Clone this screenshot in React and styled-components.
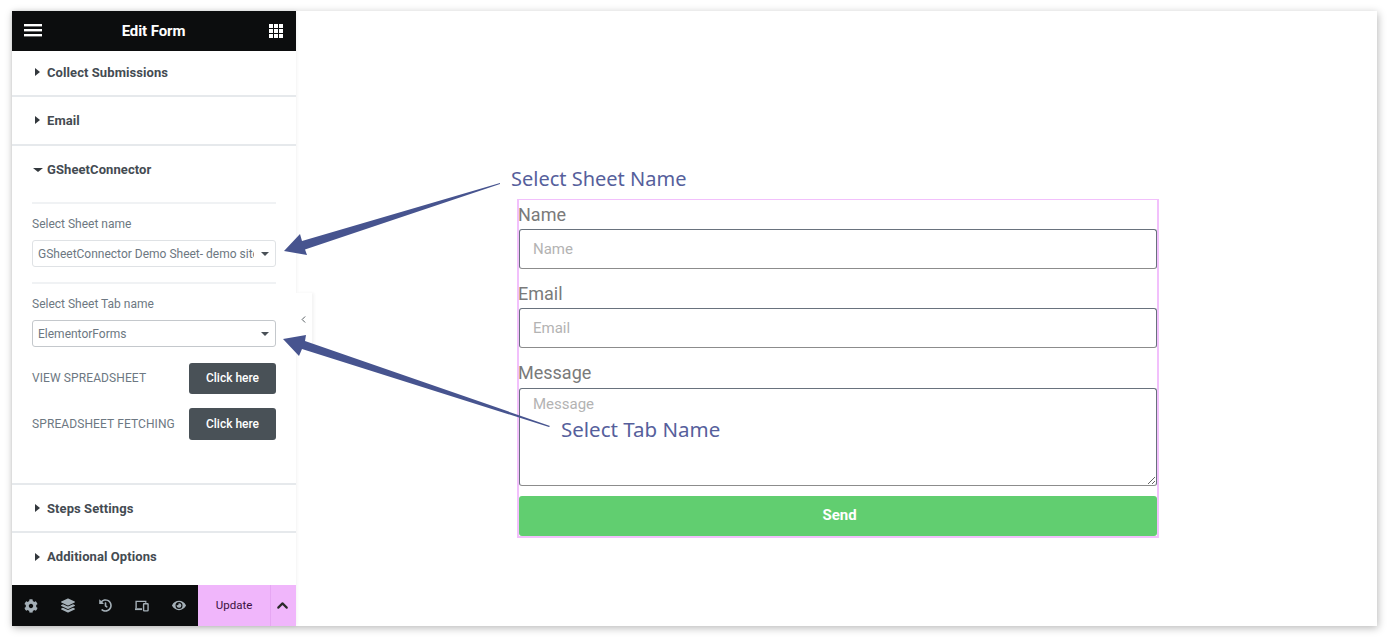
import React from 'react'
import styled, { createGlobalStyle } from 'styled-components'
import { ChevronLeft, ChevronUp } from 'lucide-react'
import { FaCog, FaEye, FaHistory, FaLayerGroup } from 'react-icons/fa'

const GlobalStyle = createGlobalStyle`
  html, body {
    margin: 0;
    padding: 0;
    background: #fff;
    overflow: hidden;
  }
  * { box-sizing: border-box; }
`

const Shot = styled.div`
  width: 1389px;
  height: 640px;
  padding: 11px 12px 14px;
`

const Frame = styled.div`
  position: relative;
  display: flex;
  width: 1365px;
  height: 615px;
  background: #fff;
  box-shadow: 1px 2px 8px rgba(0, 0, 0, 0.28);
  font-family: Roboto, "Liberation Sans", sans-serif;
`

const Panel = styled.aside`
  position: relative;
  display: flex;
  flex-direction: column;
  width: 284px;
  flex-shrink: 0;
  background: #fff;
  box-shadow: 0 0 4px rgba(0, 0, 0, 0.08);
`

const TopBar = styled.header`
  display: flex;
  align-items: center;
  justify-content: space-between;
  height: 40px;
  padding: 0 13px 0 12px;
  background: #0c0d0e;
  color: #fff;
`

const TopTitle = styled.h1`
  margin: 0 4px 0 0;
  font-size: 15px;
  font-weight: 700;
  letter-spacing: -0.1px;
`

const Section = styled.section`
  display: flex;
  flex-direction: column;
  height: ${p => p.$height}px;
  border-bottom: 2px solid #e6e9ec;
  &:last-of-type { border-bottom: 0; }
`

const SectionHead = styled.div`
  display: flex;
  align-items: center;
  gap: 6px;
  height: ${p => p.$height || 43}px;
  padding-left: 22px;
  font-size: 13px;
  font-weight: 700;
  letter-spacing: 0.08px;
  color: #444b52;
`

const CaretRight = styled.span`
  width: 0;
  height: 0;
  border-left: 5px solid #33383d;
  border-top: 4px solid transparent;
  border-bottom: 4px solid transparent;
  margin-left: 1px;
  margin-right: 1px;
`

const CaretDown = styled.span`
  width: 0;
  height: 0;
  margin-left: -1px;
  margin-right: -2px;
  border-top: 4px solid #33383d;
  border-left: 5px solid transparent;
  border-right: 5px solid transparent;
`

const SectionBody = styled.div`
  display: flex;
  flex-direction: column;
  padding: 0 20px;
`

const Group = styled.div`
  border-top: 2px solid #f0f2f4;
  padding-top: 13px;
  height: ${p => p.$height}px;
  margin-top: ${p => p.$top || 0}px;
`

const SmallLabel = styled.div`
  font-size: 12px;
  line-height: 14px;
  color: #6d7882;
  margin-bottom: 9px;
`

const SelectWrap = styled.div`
  position: relative;
  height: 27px;
  &::after {
    content: "";
    position: absolute;
    right: 7px;
    top: 12px;
    border-top: 4px solid #495157;
    border-left: 4px solid transparent;
    border-right: 4px solid transparent;
    pointer-events: none;
  }
`

const Select = styled.select`
  appearance: none;
  display: block;
  width: 100%;
  height: 100%;
  padding: 2px 21px 0 5px;
  background: #fff;
  border: 1px solid ${p => (p.$strong ? '#c4c8cc' : '#dfe2e5')};
  border-radius: 3px;
  font: 12px Roboto, "Liberation Sans", sans-serif;
  color: #6d7882;
`

const ActionRow = styled.div`
  display: flex;
  align-items: center;
  justify-content: space-between;
  margin-top: ${p => p.$gap}px;
  font-size: 12px;
  letter-spacing: 0.1px;
  color: #6d7882;
`

const DarkButton = styled.button`
  width: 87px;
  height: ${p => p.$height}px;
  border: 0;
  border-radius: 3px;
  background: #495157;
  color: #fff;
  font: 500 12px Roboto, "Liberation Sans", sans-serif;
`

const BottomBar = styled.footer`
  display: flex;
  height: 41px;
  margin-top: auto;
`

const ToolIcons = styled.div`
  display: flex;
  align-items: center;
  justify-content: space-between;
  width: 186px;
  padding: 0 12px;
  background: #0c0d0e;
  color: #a4afb7;
`

const ToolIcon = styled.span`
  display: flex;
  justify-content: center;
  width: 14px;
  font-size: ${p => p.$size || 14}px;
`

const UpdateButton = styled.button`
  width: 73px;
  padding: 0 0 2px;
  border: 0;
  border-right: 1px solid #e6a6f3;
  background: #f0b6fb;
  color: #3b1140;
  font: 11.5px Roboto, "Liberation Sans", sans-serif;
`

const MoreButton = styled.button`
  display: flex;
  align-items: center;
  justify-content: center;
  flex: 1;
  padding: 0 2px 0 0;
  border: 0;
  background: #f0b6fb;
  color: #2a2a2a;
`

const CollapseTab = styled.div`
  position: absolute;
  left: 284px;
  top: 282px;
  display: flex;
  align-items: center;
  justify-content: center;
  width: 16px;
  height: 52px;
  padding-right: 2px;
  background: #fff;
  box-shadow: 2px 0 3px rgba(0, 0, 0, 0.05);
  color: #495157;
`

const Canvas = styled.main`
  flex: 1;
  padding: 188px 0 0 221px;
`

const FormBox = styled.form`
  display: flex;
  flex-direction: column;
  width: 642px;
  height: 339px;
  border: solid #f2c0fc;
  border-width: 1px 2px 2px;
`

const Field = styled.div`
  display: flex;
  flex-direction: column;
  margin-bottom: 10px;
`

const FieldLabel = styled.label`
  margin-left: -1px;
  font-size: 18px;
  line-height: 29px;
  color: #7a7a7a;
`

const fieldStyles = `
  display: block;
  width: 100%;
  padding: 0 13px;
  border: 1px solid #69727d;
  border-bottom-color: #8c8c8c;
  border-radius: 3px;
  background: #fff;
  font: 15px Roboto, "Liberation Sans", sans-serif;
  &::placeholder { color: #b3b3b3; opacity: 1; }
`

const TextInput = styled.input`
  ${fieldStyles}
  height: 40px;
`

const TextArea = styled.textarea`
  ${fieldStyles}
  height: 98px;
  margin-top: 1px;
  padding-top: 6px;
`

const SendButton = styled.button`
  height: 40px;
  padding: 0 0 2px 3px;
  border: 0;
  border-radius: 3px;
  background: #61ce70;
  color: #fff;
  font: 700 15px Roboto, "Liberation Sans", sans-serif;
`

const Note = styled.span`
  position: absolute;
  left: ${p => p.$left}px;
  top: ${p => p.$top}px;
  font-family: "Noto Sans", "Open Sans", sans-serif;
  font-size: ${p => p.$size}px;
  line-height: 28px;
  color: #565f9c;
`

const ArrowLayer = styled.svg`
  position: absolute;
  left: 0;
  top: 0;
  pointer-events: none;
`

function MenuIcon() {
  return (
    <svg width="18" height="13" viewBox="0 0 18 13" fill="#fff">
      <rect x="0" y="0" width="18" height="2.4" />
      <rect x="0" y="5" width="18" height="2.4" />
      <rect x="0" y="10" width="18" height="2.4" />
    </svg>
  )
}

function GridIcon() {
  const cells = [0, 5, 10]
  return (
    <svg width="14" height="14" viewBox="0 0 14 14" fill="#fff">
      {cells.map(y => cells.map(x => <rect key={`${x}-${y}`} x={x} y={y} width="4" height="4" />))}
    </svg>
  )
}

function DevicesIcon() {
  return (
    <svg width="15" height="12" viewBox="0 0 15 12" fill="none" stroke="currentColor" strokeWidth="1.5">
      <path d="M1.2 8.5V1h10.3v1.4" />
      <path d="M0 9.4h7.5" strokeWidth="2" />
      <rect x="9.2" y="3.6" width="4.8" height="7.6" rx="0.6" />
    </svg>
  )
}

const Collapsed = ({ title, height, headHeight }) => (
  <Section $height={height}>
    <SectionHead $height={headHeight}>
      <CaretRight />
      {title}
    </SectionHead>
  </Section>
)

export default function App() {
  return (
    <Shot>
      <GlobalStyle />
      <Frame>
        <Panel>
          <TopBar>
            <MenuIcon />
            <TopTitle>Edit Form</TopTitle>
            <GridIcon />
          </TopBar>
          <Collapsed title="Collect Submissions" height={46} />
          <Collapsed title="Email" height={49} headHeight={50} />
          <Section $height={340}>
            <SectionHead $height={48}>
              <CaretDown />
              GSheetConnector
            </SectionHead>
            <SectionBody>
              <Group $height={80} $top={8}>
                <SmallLabel>Select Sheet name</SmallLabel>
                <SelectWrap>
                  <Select defaultValue="demo">
                    <option value="demo">GSheetConnector Demo Sheet- demo site</option>
                  </Select>
                </SelectWrap>
              </Group>
              <Group $height={79}>
                <SmallLabel>Select Sheet Tab name</SmallLabel>
                <SelectWrap>
                  <Select $strong defaultValue="forms">
                    <option value="forms">ElementorForms</option>
                  </Select>
                </SelectWrap>
              </Group>
              <ActionRow $gap={2}>
                VIEW SPREADSHEET
                <DarkButton type="button" $height={31}>Click here</DarkButton>
              </ActionRow>
              <ActionRow $gap={14}>
                SPREADSHEET FETCHING
                <DarkButton type="button" $height={32}>Click here</DarkButton>
              </ActionRow>
            </SectionBody>
          </Section>
          <Collapsed title="Steps Settings" height={48} headHeight={47} />
          <Section $height={52}>
            <SectionHead $height={47}>
              <CaretRight />
              Additional Options
            </SectionHead>
          </Section>
          <BottomBar>
            <ToolIcons>
              <ToolIcon><FaCog /></ToolIcon>
              <ToolIcon $size={15}><FaLayerGroup /></ToolIcon>
              <ToolIcon $size={13}><FaHistory /></ToolIcon>
              <ToolIcon><DevicesIcon /></ToolIcon>
              <ToolIcon $size={15}><FaEye /></ToolIcon>
            </ToolIcons>
            <UpdateButton type="button">Update</UpdateButton>
            <MoreButton type="button" aria-label="More"><ChevronUp size={17} strokeWidth={3} /></MoreButton>
          </BottomBar>
          <CollapseTab><ChevronLeft size={11} strokeWidth={2} /></CollapseTab>
        </Panel>
        <Canvas>
          <FormBox>
            <Field>
              <FieldLabel>Name</FieldLabel>
              <TextInput placeholder="Name" />
            </Field>
            <Field>
              <FieldLabel>Email</FieldLabel>
              <TextInput placeholder="Email" />
            </Field>
            <Field>
              <FieldLabel>Message</FieldLabel>
              <TextArea placeholder="Message" />
            </Field>
            <SendButton type="button">Send</SendButton>
          </FormBox>
        </Canvas>
        <ArrowLayer width="1365" height="615" viewBox="12 11 1365 615" fill="#47548f">
          <polygon points="500,183 302,241 300,234 284,251 307,255 305,249.5 500,184" />
          <polygon points="550,426 305,341 306,335 283,339 299,356 302,349 549,427" />
        </ArrowLayer>
        <Note $left={499} $top={154} $size={20}>Select Sheet Name</Note>
        <Note $left={549} $top={404} $size={20.5}>Select Tab Name</Note>
      </Frame>
    </Shot>
  )
}
